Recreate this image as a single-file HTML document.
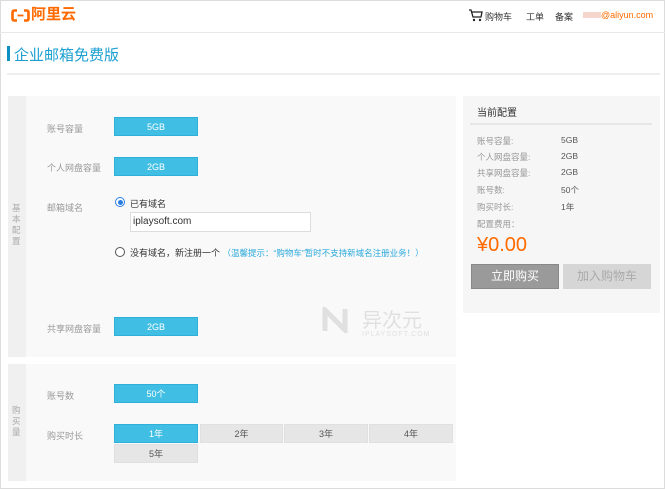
<!DOCTYPE html>
<html><head><meta charset="utf-8"><style>
*{margin:0;padding:0;box-sizing:border-box}
body{width:665px;height:489px;background:#fff;font-family:"Liberation Sans","Noto Sans CJK SC",sans-serif;position:relative;overflow:hidden;font-size:9px;color:#888}
.a{position:absolute}
.frame{left:0;top:0;width:665px;height:489px;border:1px solid #dcdcdc}
.btn{position:absolute;background:#41bee3;color:#fff;text-align:center;line-height:19px;height:19px;font-size:9px;border:1px solid #2fb0da}
.g{background:#e6e6e6;color:#555;border:1px solid #e0e0e0}
.lab{position:absolute;color:#999;font-size:9px}
.rl{position:absolute;left:477px;color:#999;font-size:8.5px}
.rv{position:absolute;left:561px;color:#555;font-size:8.5px}
</style></head><body>
<div class="a frame"></div>
<div class="a" style="left:0;top:32px;width:665px;height:1px;background:#e8e8e8"></div>
<svg class="a" style="left:11px;top:9px" width="19" height="13" viewBox="0 0 19 13"><path d="M6 1.5H3.5Q1.5 1.5 1.5 3.5V9.5Q1.5 11.5 3.5 11.5H6M13 1.5H15.5Q17.5 1.5 17.5 3.5V9.5Q17.5 11.5 15.5 11.5H13" fill="none" stroke="#ff6a00" stroke-width="2.6"/><rect x="6.5" y="5.6" width="6" height="1.8" fill="#ff6a00"/></svg>
<div class="a" style="left:31px;top:6px;color:#ff6a00;font-size:15px;font-weight:bold;line-height:18px">阿里云</div>
<svg class="a" style="left:469px;top:9px" width="14" height="13" viewBox="0 0 14 13"><path d="M0 1h2l2 7h8l1-5H3" fill="none" stroke="#222" stroke-width="1.3"/><circle cx="5" cy="11" r="1.2" fill="#222"/><circle cx="11" cy="11" r="1.2" fill="#222"/></svg>
<div class="a" style="left:485px;top:10px;color:#333;font-size:9px">购物车</div>
<div class="a" style="left:526px;top:10px;color:#333;font-size:9px">工单</div>
<div class="a" style="left:555px;top:10px;color:#333;font-size:9px">备案</div>
<div class="a" style="left:583px;top:12px;width:18px;height:6px;background:#f6d5cc"></div>
<div class="a" style="left:601px;top:10px;color:#ff6a00;font-size:9px">@aliyun.com</div>
<div class="a" style="left:7px;top:46px;width:3px;height:15px;background:#0e8fc2"></div>
<div class="a" style="left:14px;top:44px;color:#1a9fd0;font-size:15px">企业邮箱免费版</div>
<div class="a" style="left:7px;top:73px;width:653px;height:2px;background:#eee"></div>

<div class="a" style="left:8px;top:96px;width:448px;height:261px;background:#f9f9f9"></div>
<div class="a" style="left:8px;top:96px;width:18px;height:261px;background:#f0f0f0"></div>
<div class="a" style="left:12px;top:203px;width:10px;font-size:8.5px;line-height:11px;color:#aaa">基本配置</div>
<div class="lab" style="left:47px;top:122px">账号容量</div>
<div class="btn" style="left:114px;top:117px;width:84px">5GB</div>
<div class="lab" style="left:47px;top:161px">个人网盘容量</div>
<div class="btn" style="left:114px;top:157px;width:84px">2GB</div>
<div class="lab" style="left:47px;top:201px">邮箱域名</div>
<div class="a" style="left:115px;top:197px;width:10px;height:10px;border-radius:50%;border:1px solid #2a7de1;background:#fff"><div style="margin:1.5px;width:5px;height:5px;border-radius:50%;background:#2a7de1"></div></div>
<div class="a" style="left:130px;top:197px;color:#333;font-size:9px">已有域名</div>
<div class="a" style="left:130px;top:212px;width:181px;height:20px;background:#fff;border:1px solid #ddd;color:#333;font-size:10px;padding:3px 2px">iplaysoft.com</div>
<div class="a" style="left:115px;top:247px;width:10px;height:10px;border-radius:50%;border:1px solid #555;background:#fff"></div>
<div class="a" style="left:130px;top:246px;color:#333;font-size:9px">没有域名，新注册一个 <span style="color:#2aa9dc;font-size:8.5px">（温馨提示：“购物车”暂时不支持新域名注册业务！）</span></div>
<svg class="a" style="left:322px;top:307px" width="26" height="26" viewBox="0 0 26 26"><path d="M3 24V3L23 23V2" fill="none" stroke="#e0e0e0" stroke-width="5"/></svg>
<div class="a" style="left:362px;top:304px;color:#e0e0e0;font-size:20px">异次元</div>
<div class="a" style="left:362px;top:331px;color:#e0e0e0;font-size:7px;letter-spacing:1px">IPLAYSOFT.COM</div>
<div class="lab" style="left:47px;top:322px">共享网盘容量</div>
<div class="btn" style="left:114px;top:317px;width:84px">2GB</div>

<div class="a" style="left:8px;top:364px;width:448px;height:117px;background:#f9f9f9"></div>
<div class="a" style="left:8px;top:364px;width:18px;height:117px;background:#f0f0f0"></div>
<div class="a" style="left:12px;top:405px;width:10px;font-size:8.5px;line-height:11px;color:#aaa">购买量</div>
<div class="lab" style="left:47px;top:389px">账号数</div>
<div class="btn" style="left:114px;top:384px;width:84px">50个</div>
<div class="lab" style="left:47px;top:429px">购买时长</div>
<div class="btn" style="left:114px;top:424px;width:84px">1年</div>
<div class="btn g" style="left:200px;top:424px;width:83px">2年</div>
<div class="btn g" style="left:284px;top:424px;width:84px">3年</div>
<div class="btn g" style="left:369px;top:424px;width:84px">4年</div>
<div class="btn g" style="left:114px;top:444px;width:84px">5年</div>

<div class="a" style="left:463px;top:96px;width:197px;height:217px;background:#f6f6f6"></div>
<div class="a" style="left:477px;top:104px;color:#333;font-size:10px">当前配置</div>
<div class="a" style="left:470px;top:123px;width:182px;height:2px;background:#e6e6e6"></div>
<div class="rl" style="top:135px">账号容量:</div><div class="rv" style="top:135px">5GB</div>
<div class="rl" style="top:151px">个人网盘容量:</div><div class="rv" style="top:151px">2GB</div>
<div class="rl" style="top:167px">共享网盘容量:</div><div class="rv" style="top:167px">2GB</div>
<div class="rl" style="top:184px">账号数:</div><div class="rv" style="top:184px">50个</div>
<div class="rl" style="top:201px">购买时长:</div><div class="rv" style="top:201px">1年</div>
<div class="rl" style="top:218px">配置费用：</div>
<div class="a" style="left:477px;top:234px;color:#ff6a00;font-size:20px">¥0.00</div>
<div class="a" style="left:471px;top:264px;width:88px;height:25px;background:#9a9a9a;border:1px solid #888;color:#fff;font-size:12px;text-align:center;line-height:23px">立即购买</div>
<div class="a" style="left:563px;top:264px;width:88px;height:25px;background:#d6d6d6;color:#aaa;font-size:12px;text-align:center;line-height:25px">加入购物车</div>
</body></html>
